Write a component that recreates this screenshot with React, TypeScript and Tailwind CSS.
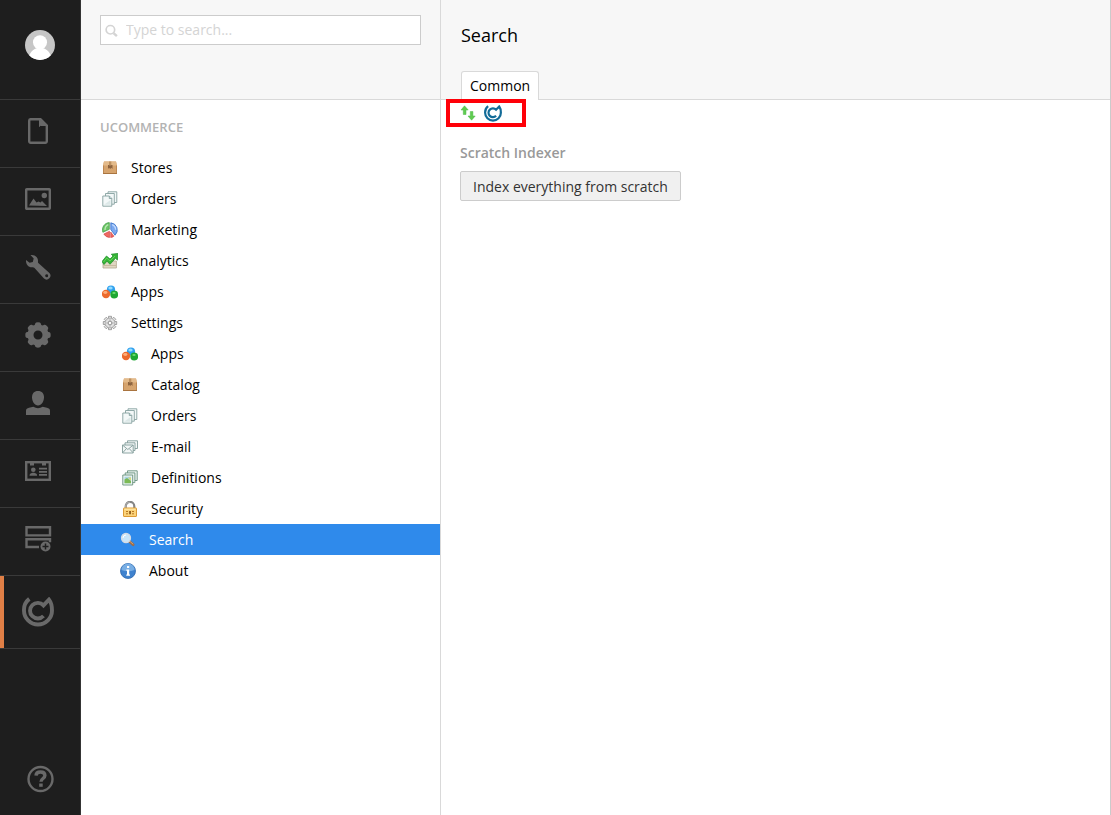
import { useState, type ReactNode } from "react";

const strokeProps = { fill: "none", stroke: "currentColor", strokeWidth: 2.4 } as const;

function RailIcon({ children }: { children: ReactNode }) {
  return (
    <svg viewBox="0 0 28 28" className="size-7" fill="currentColor" aria-hidden="true">
      {children}
    </svg>
  );
}

function DocumentIcon() {
  return (
    <RailIcon>
      <path d="M6.500 2.200h10L22.800 8.500V24.300a1.500 1.500 0 0 1-1.500 1.500H6.700A1.500 1.500 0 0 1 5.200 24.300V3.700A1.500 1.500 0 0 1 6.500 2.200Z" {...strokeProps} />
      <path d="M15.500 2v7.500l1-1H23Z" stroke="currentColor" strokeLinejoin="round" />
    </RailIcon>
  );
}

function ImageIcon() {
  return (
    <RailIcon>
      <rect x="2.200" y="4.200" width="23.600" height="19.600" rx="0.500" {...strokeProps} />
      <circle cx="20.300" cy="10.500" r="2.700" />
      <path d="M5 20.500 9.500 13.500l3 4 2-1 2 1 1.500-1.500 5 5Z" />
    </RailIcon>
  );
}

function WrenchIcon() {
  return (
    <RailIcon>
      <path
        fillRule="evenodd"
        d="M6.500 2C11.300 1.300 14.400 4.600 14 8.500c-.1.800 0 1.200.6 1.800l10.800 9.700a3.900 3.900 0 0 1-5.400 5.600L10.300 14.800c-.6-.6-1.100-.7-1.900-.6C4.600 14.500 1.700 11.500 2 6.900l3.600 2.900 3.200-.9.900-3.400ZM22.600 21.300a1.500 1.500 0 1 0 .1 3 1.500 1.500 0 0 0-.1-3Z"
      />
    </RailIcon>
  );
}

const gearTeeth = [0, 45, 90, 135, 180, 225, 270, 315];

function GearIcon() {
  return (
    <RailIcon>
      <circle cx="14" cy="14" r="7.500" fill="none" stroke="currentColor" strokeWidth="6" />
      {gearTeeth.map((a) => (
        <path key={a} d="M10.400 5 11.200 2.400Q11.500 1.300 14 1.300T16.800 2.400L17.600 5Z" transform={`rotate(${a} 14 14)`} />
      ))}
    </RailIcon>
  );
}

function UserIcon() {
  return (
    <RailIcon>
      <path d="M14 2c4 0 6 2.600 6 6.300 0 4.200-2.600 8.200-6 8.200s-6-4-6-8.200C8 4.600 10 2 14 2Z" />
      <path d="M2 26v-4.200c0-1.800 1.200-2.500 3-3l4.300-1.100a9 9 0 0 0 9.400 0l4.300 1.100c1.800.5 3 1.200 3 3V26Z" />
    </RailIcon>
  );
}

function CardIcon() {
  return (
    <RailIcon>
      <rect x="2.200" y="5.200" width="23.600" height="17.600" {...strokeProps} />
      <path d="M6 5h4v3.500H6ZM18 5h4v3.500h-4ZM15 10.800h8v1.700h-8ZM15 14h8v1.700h-8ZM15 17h8v1.700h-8Z" />
      <circle cx="9.300" cy="12.800" r="2.300" />
      <path d="M5.500 18.700c0-2 1-2.500 3-3h1.600c2 .5 3 1 3 3Z" />
    </RailIcon>
  );
}

function AddSectionIcon() {
  return (
    <RailIcon>
      <path d="M2.500 2.200H26v8.200H2.500ZM15 22H2.500v-7.800H26v3" {...strokeProps} />
      <circle cx="21.500" cy="21.500" r="5" />
      <path d="M18.500 21.500h6M21.500 18.500v6" stroke="#1e1e1e" strokeWidth="1.500" />
    </RailIcon>
  );
}

function CommerceLogo({ className }: { className: string }) {
  return (
    <svg viewBox="0 0 32 30" className={className} fill="none" stroke="currentColor" strokeWidth="3.900" aria-hidden="true">
      <path d="M7.300 1.900A14 14 0 0 0 2 13.500a14 14 0 0 0 28 0C30 9 29.300 5.500 27 2.600L21.500 8.300A7.800 7.800 0 1 0 21.500 19" />
    </svg>
  );
}

function HelpIcon() {
  return (
    <RailIcon>
      <circle cx="14.500" cy="14" r="12" {...strokeProps} />
      <path d="M10 10.600C10.100 7.800 12 7 14.500 7c2.700 0 4.400 1.200 4.400 3.500 0 3-3.900 3-3.900 6.200" {...strokeProps} strokeWidth="3.400" />
      <path d="M13.200 18.500h3.500v3.300h-3.500Z" />
    </RailIcon>
  );
}

const rail = [
  { label: "Content", icon: <DocumentIcon /> },
  { label: "Media", icon: <ImageIcon /> },
  { label: "Settings", icon: <WrenchIcon /> },
  { label: "Developer", icon: <GearIcon /> },
  { label: "Users", icon: <UserIcon /> },
  { label: "Members", icon: <CardIcon /> },
  { label: "Forms", icon: <AddSectionIcon /> },
];

function TreeSvg({ children }: { children: ReactNode }) {
  return (
    <svg viewBox="0 0 16 16" className="size-4 shrink-0" aria-hidden="true">
      {children}
    </svg>
  );
}

function BoxIcon() {
  return (
    <TreeSvg>
      <path d="M2 1.500h12l1 4V14H1V5.500Z" fill="#d6a46e" />
      <path d="M2 1.500h12l1 4H1Z" fill="#e3ba8a" />
      <path d="M1.500 5.500v8h13v-8" fill="none" stroke="#bd8853" />
      <path d="M1 13.500h14" stroke="#a9743f" />
      <path d="M6 5h4.500v4L9.300 7.800 8.200 9 7 7.800 6 9Z" fill="#8d6440" />
      <path d="M7 1.500h2.300v4H7Z" fill="#bd9160" />
    </TreeSvg>
  );
}

function PagesIcon() {
  return (
    <TreeSvg>
      <g fill="#f3f8f8" stroke="#86a09f" strokeWidth="0.900">
        <path d="M6 .8h8.800v10.700H6Z" />
        <path d="M3.500 2.500h8.800v10.700H3.500Z" />
        <path d="M.8 5h6.500l2.500 2.500v7.700h-9Z" />
        <path d="M7.300 5v2.500h2.500" fill="#c8dcdc" />
      </g>
      <path d="M2 13.800h6.500V9Z" fill="#dce8e8" />
    </TreeSvg>
  );
}

function PieIcon() {
  return (
    <TreeSvg>
      <path d="M7.300 7.300V.6A7.200 7.200 0 0 0 .9 10.300Z" fill="#6cc467" stroke="#3d9a43" strokeWidth="0.700" />
      <path d="M8.800 7.500V.8A7.200 7.200 0 0 1 13 13.200Z" fill="#7ba9ef" stroke="#356fc7" strokeWidth="0.800" />
      <path d="M7.500 9.300 1.800 12a7 7 0 0 0 5.700 3.500ZM8.700 10v5.500a6 6 0 0 0 3.200-1.300Z" fill="#ee6a62" stroke="#d0393a" strokeWidth="0.600" />
      <path d="M3 8C3 5 4.500 3.500 6.300 2.700" fill="none" stroke="#b8e8b0" strokeWidth="1.400" />
      <path d="M10.200 2.700c2 .8 3.400 2.200 3.500 5" fill="none" stroke="#c1daff" strokeWidth="1.400" />
    </TreeSvg>
  );
}

function ChartIcon() {
  return (
    <TreeSvg>
      <path d="M1 8h13.400v7H1Z" fill="#e0d7c3" stroke="#b3a88f" strokeWidth="0.800" />
      <path d="M1.500 12.500h12.500" stroke="#c8bba0" />
      <path d="m0 8.500 4.500-5.500L8 6l3-3L9.300 1.200 15.900.4l-.5 6.700-1.900-1.800L8 11.300 5 8.200 2 11.500Z" fill="#36b437" stroke="#168b24" strokeWidth="0.700" />
      <path d="M1.500 9 4.700 5 8 8l5-5" fill="none" stroke="#7be06b" strokeWidth="0.700" />
    </TreeSvg>
  );
}

function BallsIcon() {
  return (
    <TreeSvg>
      <circle cx="9" cy="5.500" r="4.100" fill="#2fa0ee" />
      <circle cx="4" cy="10" r="4.200" fill="#ec6a2d" />
      <circle cx="12.200" cy="10.500" r="3.900" fill="#1ea832" />
      <ellipse cx="8.500" cy="4" rx="2.200" ry="1.500" fill="#94dbff" />
      <ellipse cx="3.300" cy="8.500" rx="2.100" ry="1.400" fill="#ffad79" />
      <ellipse cx="12" cy="9" rx="1.700" ry="1.100" fill="#70de70" />
    </TreeSvg>
  );
}

function SmallGearIcon() {
  return (
    <TreeSvg>
      {gearTeeth.map((a) => (
        <path key={a} d="M6.500 3.500V1.300h3v2.200" fill="#e4e4e4" stroke="#8e8e8e" strokeWidth="0.800" transform={`rotate(${a} 8 8)`} />
      ))}
      <circle cx="8" cy="8" r="4.900" fill="#e2e2e2" stroke="#999" strokeWidth="0.700" />
      <path d="M8 3.500v9M3.500 8h9" stroke="#bbb" />
      <circle cx="8" cy="8" r="1.900" fill="#fff" stroke="#8e8e8e" />
    </TreeSvg>
  );
}

function MailIcon() {
  return (
    <TreeSvg>
      <g fill="#f3f7f7" stroke="#829c9a" strokeWidth="0.900">
        <path d="M5.500 1.800h10v7.700h-10Z" />
        <path d="M3 3.800h10v7.700H3Z" />
        <path d="M.5 6h10.700v8H.5Z" />
        <path d="m.8 6.300 5 4.200 5.100-4.200M.8 13.700l3.500-4M11 13.700l-3.600-4" fill="none" />
      </g>
    </TreeSvg>
  );
}

function DefinitionsIcon() {
  return (
    <TreeSvg>
      <g fill="#edf5f2" stroke="#68917e" strokeWidth="0.900">
        <path d="M5.500.8h9.700v9.700H5.500Z" />
        <path d="M3.200 2.900h9.700v9.700H3.200Z" />
        <path d="M.8 5h9.900v10H.8Z" />
      </g>
      <path d="M2.500 6.700h6.500v6.500H2.500Z" fill="#a9d3e6" />
      <path d="M2.500 9.500 5 8l4 3v2.200H2.500Z" fill="#7cba55" />
      <path d="M6 7.500h3v3.300Z" fill="#d9dc72" />
    </TreeSvg>
  );
}

function LockIcon() {
  return (
    <TreeSvg>
      <path d="M3.700 8V5.200a4.300 4.300 0 0 1 8.600 0V8" fill="none" stroke="#858585" strokeWidth="2.200" />
      <path d="M3.700 7V5.200a4.300 4.300 0 0 1 4.300-4" fill="none" stroke="#c8c8c8" strokeWidth="0.700" />
      <rect x="1.500" y="7" width="13" height="8.500" rx="0.500" fill="#fbd37a" stroke="#dc9a35" />
      <path d="M2.500 8.200h11" stroke="#ffedb0" />
      <path d="M4 10.500h2M10 10.500h2M4 12.800h2M10 12.800h2" stroke="#b87720" />
      <path d="M7.200 9.900h1.700v3.400H7.200Z" fill="#865418" />
    </TreeSvg>
  );
}

function MagnifierIcon() {
  return (
    <TreeSvg>
      <path d="m9.500 9.500 3.700 3.200" stroke="#9e6b45" strokeWidth="2.700" strokeLinecap="round" />
      <path d="m9.800 9.200 3.400 3" stroke="#ddb083" strokeWidth="0.800" />
      <circle cx="6" cy="6" r="4.500" fill="#c8e5fa" stroke="#d5dce5" strokeWidth="1.300" />
      <path d="M3 6a3 3 0 0 1 3-3" fill="none" stroke="#fff" />
    </TreeSvg>
  );
}

function InfoIcon() {
  return (
    <TreeSvg>
      <circle cx="8" cy="8" r="7.500" fill="#3f82ce" stroke="#2e68ad" strokeWidth="0.800" />
      <path d="M1.500 7a6.500 6.500 0 0 1 13 0Q8 9.500 1.500 7Z" fill="#78aee4" />
      <path d="M7 3h2.200v2H7ZM6.300 6.500h2.900v5H10v1.300H6.300v-1.300H7v-3.700h-.7Z" fill="#fff" />
    </TreeSvg>
  );
}

const tree = [
  { id: "stores", label: "Stores", icon: <BoxIcon />, indent: "pl-[21px]" },
  { id: "orders", label: "Orders", icon: <PagesIcon />, indent: "pl-[21px]" },
  { id: "marketing", label: "Marketing", icon: <PieIcon />, indent: "pl-[21px]" },
  { id: "analytics", label: "Analytics", icon: <ChartIcon />, indent: "pl-[21px]" },
  { id: "apps", label: "Apps", icon: <BallsIcon />, indent: "pl-[21px]" },
  { id: "settings", label: "Settings", icon: <SmallGearIcon />, indent: "pl-[21px]" },
  { id: "settings-apps", label: "Apps", icon: <BallsIcon />, indent: "pl-[41px]" },
  { id: "settings-catalog", label: "Catalog", icon: <BoxIcon />, indent: "pl-[41px]" },
  { id: "settings-orders", label: "Orders", icon: <PagesIcon />, indent: "pl-[41px]" },
  { id: "settings-email", label: "E-mail", icon: <MailIcon />, indent: "pl-[41px]" },
  { id: "settings-definitions", label: "Definitions", icon: <DefinitionsIcon />, indent: "pl-[41px]" },
  { id: "settings-security", label: "Security", icon: <LockIcon />, indent: "pl-[41px]" },
  { id: "settings-search", label: "Search", icon: <MagnifierIcon />, indent: "pl-[39px]" },
  { id: "settings-about", label: "About", icon: <InfoIcon />, indent: "pl-[39px]" },
];

function SectionRail() {
  return (
    <nav aria-label="Sections" className="flex w-[81px] shrink-0 flex-col border-r border-[#343434] bg-[#1e1e1e] text-[#696969]">
      <button type="button" aria-label="Profile" className="flex h-[100px] items-center justify-center border-b border-[#3a3a3a] pb-[10px]">
        <svg viewBox="0 0 30 30" className="size-[30px] rounded-full bg-[#c6c6c6]" fill="#fff" aria-hidden="true">
          <path d="M4 30V26c2-5 5-7 8-8h6c3 1 6 3 8 8v4Z" />
          <circle cx="15" cy="12.300" r="7" />
        </svg>
      </button>
      {rail.map((item) => (
        <button
          key={item.label}
          type="button"
          aria-label={item.label}
          className="flex h-[68px] items-center justify-center border-b border-[#3a3a3a] pr-1 pb-[5px]"
        >
          {item.icon}
        </button>
      ))}
      <button
        type="button"
        aria-label="uCommerce"
        aria-current="page"
        className="flex h-[73px] items-stretch border-b border-[#3a3a3a]"
      >
        <span className="w-1 bg-[#e07f46]" />
        <span className="flex flex-1 items-center justify-center pr-2">
          <CommerceLogo className="h-[30px] w-8" />
        </span>
      </button>
      <button type="button" aria-label="Help" className="mt-auto flex h-[72px] items-center justify-center">
        <HelpIcon />
      </button>
    </nav>
  );
}

export default function App() {
  const [selected, setSelected] = useState("settings-search");

  return (
    <div className="flex min-h-screen bg-white font-['Open_Sans','Noto_Sans',sans-serif] text-sm text-black">
      <SectionRail />

      <aside className="flex w-[360px] shrink-0 flex-col border-r border-[#d9d9d9]">
        <div className="h-[100px] border-b border-[#d9d9d9] bg-[#f7f7f7] px-[19px] pt-[15px]">
          <label className="flex h-[30px] items-center gap-2 border border-[#ccc] bg-white pl-1">
            <svg viewBox="0 0 14 14" className="size-[13px] text-[#d4d4d4]" fill="none" stroke="currentColor" aria-hidden="true">
              <circle cx="5.800" cy="6.200" r="4.600" strokeWidth="1.800" />
              <path d="m9.200 9.800 3.600 3.200" strokeWidth="2.700" />
            </svg>
            <input
              type="search"
              aria-label="Search tree"
              placeholder="Type to search..."
              className="min-w-0 flex-1 bg-transparent outline-none placeholder:text-[#d4d4d4]"
            />
          </label>
        </div>

        <h2 className="px-[19px] pt-[17px] pb-[15px] text-[13px] leading-5 font-semibold text-[#b3b3b3]">UCOMMERCE</h2>
        <ul>
          {tree.map((node) => (
            <li key={node.id}>
              <a
                href={`#${node.id}`}
                onClick={() => setSelected(node.id)}
                className={`flex h-[31px] items-center gap-[13px] ${node.indent} ${selected === node.id ? "bg-[#2f8aeb] text-white" : ""}`}
              >
                {node.icon}
                {node.label}
              </a>
            </li>
          ))}
        </ul>
      </aside>

      <main className="min-w-0 flex-1 border-r border-[#cbcbcb]">
        <header className="flex h-[100px] flex-col justify-between border-b border-[#d9d9d9] bg-[#f7f7f7] px-5 pt-[21px]">
          <h1 className="text-lg leading-7">Search</h1>
          <div role="tablist" className="-mb-px flex">
            <button
              type="button"
              role="tab"
              aria-selected="true"
              className="h-[29px] rounded-t-[3px] border border-b-0 border-[#d9d9d9] bg-white px-2"
            >
              Common
            </button>
          </div>
        </header>

        <div role="toolbar" aria-label="Index actions" className="relative -mt-px ml-[5px] flex h-7 w-20 items-center gap-2 border-4 border-[#ff0008] pl-[10px]">
          <button type="button" aria-label="Reindex">
            <svg viewBox="0 0 16 16" className="block size-4" fill="#60cb50" stroke="#4ab848" strokeWidth="0.500" aria-hidden="true">
              <path d="M4.500.8 8.200 5H6v4.500H3.300V5H1Z" />
              <path d="M10.300 6.500h2.600V11h2.300L11.600 15.200 8 11h2.300Z" />
            </svg>
          </button>
          <button type="button" aria-label="uCommerce" className="text-[#126b98]">
            <CommerceLogo className="block h-[17px] w-[18px]" />
          </button>
        </div>

        <section className="px-[19px] pt-4">
          <h3 className="mb-2 leading-5 font-semibold text-[#999]">Scratch Indexer</h3>
          <button type="button" className="h-[30px] rounded-[2px] border border-[#ccc] bg-[#f0f0f0] px-3 pt-px text-[#333]">
            Index everything from scratch
          </button>
        </section>
      </main>
    </div>
  );
}
